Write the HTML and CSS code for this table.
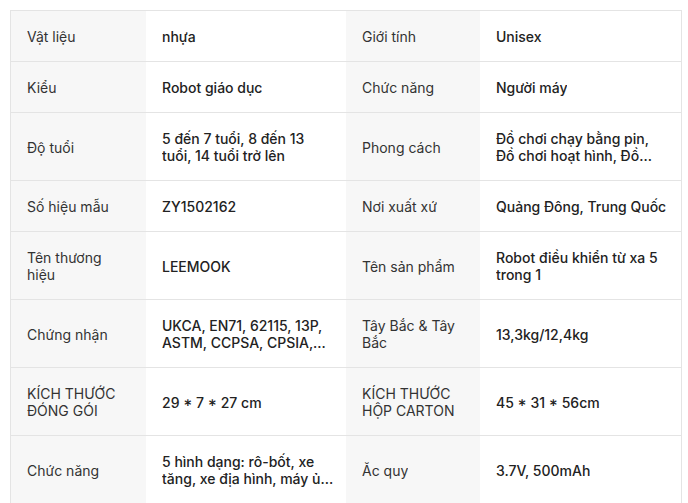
FILE: index.html
```html
<!DOCTYPE html>
<html lang="vi">
<head>
<meta charset="utf-8">
<link rel="stylesheet" href="styles.css">
</head>
<body>
<div class="spec">
  <div class="row">
    <div class="cell label"><span class="txt">Vật liệu</span></div>
    <div class="cell value"><span class="txt">nhựa</span></div>
    <div class="cell label"><span class="txt">Giới tính</span></div>
    <div class="cell value"><span class="txt">Unisex</span></div>
  </div>
  <div class="row">
    <div class="cell label"><span class="txt">Kiểu</span></div>
    <div class="cell value"><span class="txt">Robot giáo dục</span></div>
    <div class="cell label"><span class="txt">Chức năng</span></div>
    <div class="cell value"><span class="txt">Người máy</span></div>
  </div>
  <div class="row">
    <div class="cell label"><span class="txt">Độ tuổi</span></div>
    <div class="cell value"><span class="txt">5 đến 7 tuổi, 8 đến 13 tuổi, 14 tuổi trở lên</span></div>
    <div class="cell label"><span class="txt">Phong cách</span></div>
    <div class="cell value"><span class="txt">Đồ chơi chạy bằng pin, Đồ chơi hoạt hình, Đồ chơi điện tử</span></div>
  </div>
  <div class="row">
    <div class="cell label"><span class="txt">Số hiệu mẫu</span></div>
    <div class="cell value"><span class="txt">ZY1502162</span></div>
    <div class="cell label"><span class="txt">Nơi xuất xứ</span></div>
    <div class="cell value"><span class="txt">Quảng Đông, Trung Quốc</span></div>
  </div>
  <div class="row">
    <div class="cell label"><span class="txt">Tên thương hiệu</span></div>
    <div class="cell value"><span class="txt">LEEMOOK</span></div>
    <div class="cell label"><span class="txt">Tên sản phẩm</span></div>
    <div class="cell value"><span class="txt">Robot điều khiển từ xa 5 trong 1</span></div>
  </div>
  <div class="row">
    <div class="cell label"><span class="txt">Chứng nhận</span></div>
    <div class="cell value"><span class="txt">UKCA, EN71, 62115, 13P, ASTM, CCPSA, CPSIA, CE, FCC</span></div>
    <div class="cell label"><span class="txt">Tây Bắc &amp; Tây Bắc</span></div>
    <div class="cell value"><span class="txt">13,3kg/12,4kg</span></div>
  </div>
  <div class="row">
    <div class="cell label"><span class="txt">KÍCH THƯỚC ĐÓNG GÓI</span></div>
    <div class="cell value"><span class="txt">29 * 7 * 27 cm</span></div>
    <div class="cell label"><span class="txt">KÍCH THƯỚC HỘP CARTON</span></div>
    <div class="cell value"><span class="txt">45 * 31 * 56cm</span></div>
  </div>
  <div class="row">
    <div class="cell label"><span class="txt">Chức năng</span></div>
    <div class="cell value"><span class="txt">5 hình dạng: rô-bốt, xe tăng, xe địa hình, máy ủi, máy xúc</span></div>
    <div class="cell label"><span class="txt">Ắc quy</span></div>
    <div class="cell value"><span class="txt">3.7V, 500mAh</span></div>
  </div>
</div>
</body>
</html>
```
FILE: styles.css
```css
html, body {
  margin: 0;
  padding: 0;
  background: #ffffff;
}
body {
  padding: 10px 0 0 10px;
  font-family: Inter, "Noto Sans", sans-serif;
  font-size: 14px;
  line-height: 17px;
}
.spec {
  width: 670px;
  border: 1px solid #e4e4e4;
}
.row {
  display: grid;
  grid-template-columns: 135px 200px 134px 201px;
  border-top: 1px solid #e4e4e4;
}
.row:first-child {
  border-top: none;
}
.cell {
  display: flex;
  align-items: center;
  padding: 17px 16px 16px 16px;
  min-width: 0;
}
.label {
  background: #f7f7f7;
  color: #333333;
  font-weight: 400;
}
.value {
  background: #ffffff;
  color: #222222;
  font-weight: 500;
  padding-right: 10px;
}
.txt {
  display: -webkit-box;
  -webkit-box-orient: vertical;
  -webkit-line-clamp: 2;
  overflow: hidden;
}
```
